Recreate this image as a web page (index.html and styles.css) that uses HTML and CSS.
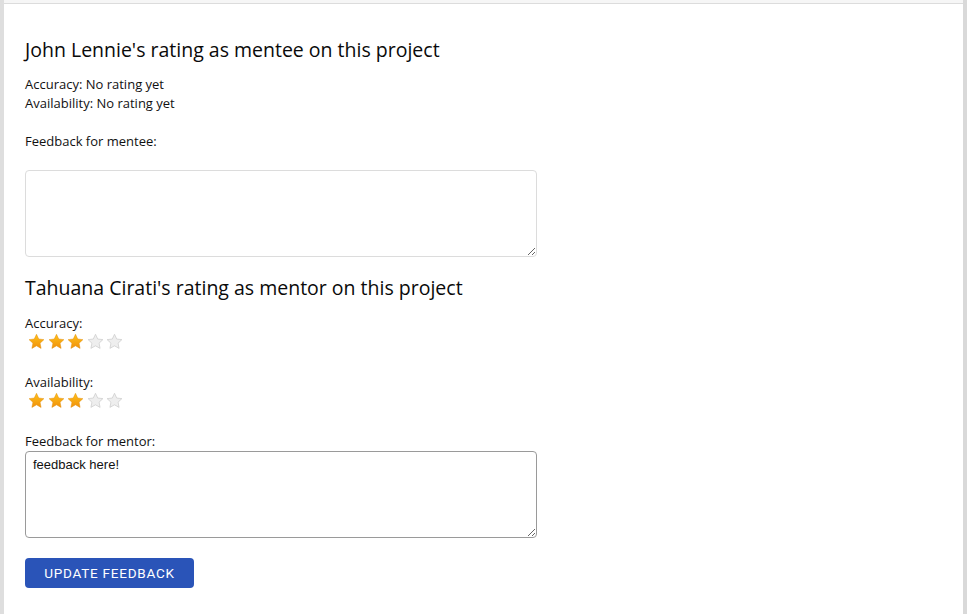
FILE: index.html
```html
<!DOCTYPE html>
<html>
<head>
<meta charset="utf-8">
<link rel="stylesheet" href="styles.css">
</head>
<body>
<div class="frame">
  <div class="topbar"></div>
  <div class="content">
    <h2 class="title">John Lennie's rating as mentee on this project</h2>
    <div class="line">Accuracy: No rating yet</div>
    <div class="line">Availability: No rating yet</div>
    <div class="line gap below">Feedback for mentee:</div>
    <textarea class="box light"></textarea>

    <h2 class="title second">Tahuana Cirati's rating as mentor on this project</h2>
    <div class="line">Accuracy:</div>
    <div class="stars">
      <svg viewBox="0 0 20 20" class="star on"><defs><linearGradient id="g" x1="0" y1="0" x2="0" y2="1"><stop offset="0" stop-color="#ffc21a"/><stop offset="1" stop-color="#f0900a"/></linearGradient></defs><path d="M10 1.5l2.6 5.6 6.1.7-4.5 4.2 1.2 6.1L10 15.1l-5.4 3 1.2-6.1L1.3 7.8l6.1-.7z"/></svg>
      <svg viewBox="0 0 20 20" class="star on"><path d="M10 1.5l2.6 5.6 6.1.7-4.5 4.2 1.2 6.1L10 15.1l-5.4 3 1.2-6.1L1.3 7.8l6.1-.7z"/></svg>
      <svg viewBox="0 0 20 20" class="star on"><path d="M10 1.5l2.6 5.6 6.1.7-4.5 4.2 1.2 6.1L10 15.1l-5.4 3 1.2-6.1L1.3 7.8l6.1-.7z"/></svg>
      <svg viewBox="0 0 20 20" class="star off"><path d="M10 1.5l2.6 5.6 6.1.7-4.5 4.2 1.2 6.1L10 15.1l-5.4 3 1.2-6.1L1.3 7.8l6.1-.7z"/></svg>
      <svg viewBox="0 0 20 20" class="star off"><path d="M10 1.5l2.6 5.6 6.1.7-4.5 4.2 1.2 6.1L10 15.1l-5.4 3 1.2-6.1L1.3 7.8l6.1-.7z"/></svg>
    </div>
    <div class="line after-stars">Availability:</div>
    <div class="stars">
      <svg viewBox="0 0 20 20" class="star on"><path d="M10 1.5l2.6 5.6 6.1.7-4.5 4.2 1.2 6.1L10 15.1l-5.4 3 1.2-6.1L1.3 7.8l6.1-.7z"/></svg>
      <svg viewBox="0 0 20 20" class="star on"><path d="M10 1.5l2.6 5.6 6.1.7-4.5 4.2 1.2 6.1L10 15.1l-5.4 3 1.2-6.1L1.3 7.8l6.1-.7z"/></svg>
      <svg viewBox="0 0 20 20" class="star on"><path d="M10 1.5l2.6 5.6 6.1.7-4.5 4.2 1.2 6.1L10 15.1l-5.4 3 1.2-6.1L1.3 7.8l6.1-.7z"/></svg>
      <svg viewBox="0 0 20 20" class="star off"><path d="M10 1.5l2.6 5.6 6.1.7-4.5 4.2 1.2 6.1L10 15.1l-5.4 3 1.2-6.1L1.3 7.8l6.1-.7z"/></svg>
      <svg viewBox="0 0 20 20" class="star off"><path d="M10 1.5l2.6 5.6 6.1.7-4.5 4.2 1.2 6.1L10 15.1l-5.4 3 1.2-6.1L1.3 7.8l6.1-.7z"/></svg>
    </div>
    <div class="line after-stars">Feedback for mentor:</div>
    <textarea class="box dark">feedback here!</textarea>
    <button class="btn">UPDATE FEEDBACK</button>
  </div>
</div>
</body>
</html>
```

FILE: styles.css
```css
html, body {
  margin: 0;
  padding: 0;
  background: #fff;
}
.frame {
  height: 614px;
  box-sizing: border-box;
  border-left: 4px solid #dedede;
  border-right: 4px solid #d9d9d9;
  overflow: hidden;
  font-family: "Open Sans", "DejaVu Sans", sans-serif;
  color: #111;
}
.topbar {
  height: 3px;
  background: #f6f6f6;
  border-bottom: 1px solid #dcdcdc;
}
.content {
  padding: 32px 0 0 21px;
  display: flex;
  flex-direction: column;
  align-items: flex-start;
}
.title {
  margin: 0 0 12px 0;
  font-size: 19.5px;
  font-weight: 400;
  line-height: 27px;
  color: #0a0a0a;
}
.title.second {
  margin-top: 17px;
  margin-bottom: 13px;
}
.line {
  font-size: 13px;
  line-height: 19px;
}
.gap {
  margin-top: 19px;
}
.below {
  margin-bottom: 19px;
}
.after-stars {
  margin-top: 23px;
}
.box {
  display: block;
  width: 512px;
  height: 87px;
  box-sizing: border-box;
  border-radius: 4px;
  padding: 5px 7px;
  font-family: "Liberation Sans", Arial, sans-serif;
  font-size: 13px;
  color: #111;
  resize: vertical;
  margin: 0;
  outline: none;
}
.box.light {
  border: 1px solid #dcdcdc;
}
.box.dark {
  border: 1px solid #9a9a9a;
}
.stars {
  display: flex;
  gap: 2.5px;
  padding-left: 3px;
  height: 17px;
  align-items: center;
}
.star {
  width: 17px;
  height: 17px;
}
.star.on path {
  fill: url(#g);
  stroke: #e3900c;
  stroke-width: 0.6;
}
.star.off path {
  fill: #eeeeee;
  stroke: #c9c9c9;
  stroke-width: 0.8;
}
.btn {
  margin-top: 20px;
  width: 169px;
  height: 30px;
  border: none;
  border-radius: 4px;
  background: #2a54b8;
  color: #fff;
  font-family: Roboto, "Liberation Sans", sans-serif;
  font-weight: 400;
  font-size: 13.5px;
  letter-spacing: 0.75px;
  cursor: pointer;
}
```
